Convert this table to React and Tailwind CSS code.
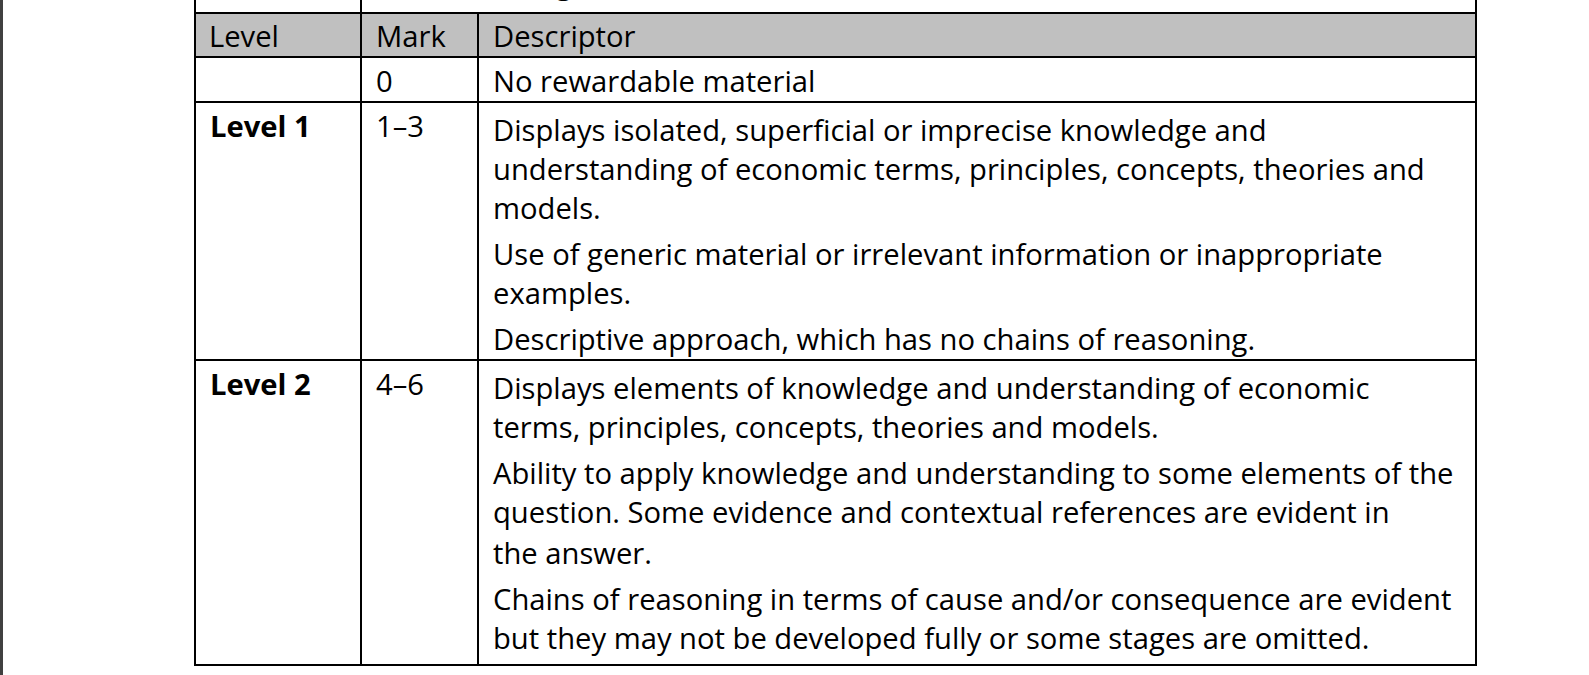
import React from 'react';

const font = { fontFamily: '"Open Sans", "Noto Sans", sans-serif' };

const rows = [
  {
    level: 'Level 1',
    mark: '1–3',
    paras: [
      [
        'Displays isolated, superficial or imprecise knowledge and',
        'understanding of economic terms, principles, concepts, theories and',
        'models.',
      ],
      ['Use of generic material or irrelevant information or inappropriate', 'examples.'],
      ['Descriptive approach, which has no chains of reasoning.'],
    ],
    pb: 'pb-0',
  },
  {
    level: 'Level 2',
    mark: '4–6',
    paras: [
      [
        'Displays elements of knowledge and understanding of economic',
        'terms, principles, concepts, theories and models.',
      ],
      [
        'Ability to apply knowledge and understanding to some elements of the',
        'question. Some evidence and contextual references are evident in',
        'the answer.',
      ],
      [
        'Chains of reasoning in terms of cause and/or consequence are evident',
        'but they may not be developed fully or some stages are omitted.',
      ],
    ],
    pb: 'pb-[6px]',
  },
];

function LevelRow({ row }) {
  return (
    <div className="flex border-b-2 border-black">
      <div className="w-[166px] shrink-0 border-r-2 border-black pl-[14px] pt-[4px] font-bold">
        {row.level}
      </div>
      <div className="w-[117px] shrink-0 border-r-2 border-black pl-[14px] pt-[4px]">{row.mark}</div>
      <div className={`w-[998px] shrink-0 border-r-2 border-black pl-[14px] pt-[1px] ${row.pb}`}>
        {row.paras.map((lines, i) => (
          <div key={i} className="mt-[7px]">
            {lines.map((line, j) => (
              <div key={j} className={`whitespace-nowrap ${line === 'the answer.' ? 'mt-[2px]' : ''}`}>
                {line}
              </div>
            ))}
          </div>
        ))}
      </div>
    </div>
  );
}

export default function App() {
  return (
    <div className="flex h-[675px] w-[1589px] overflow-hidden bg-white text-black" style={font}>
      <div className="w-[3px] shrink-0 bg-[#404040]" />
      <div className="ml-[191px] flex w-[1283px] flex-col self-start border-l-2 border-black text-[29.2px] leading-[39px]">
        {/* cut-off row above the header */}
        <div className="flex h-[14px] border-b-2 border-black">
          <div className="w-[166px] shrink-0 border-r-2 border-black" />
          <div className="w-[1115px] shrink-0 overflow-hidden border-r-2 border-black pl-[99px]">
            <div className="-mt-[36px] whitespace-nowrap">Marking</div>
          </div>
        </div>

        <div className="flex h-[44px] border-b-2 border-black bg-[#c0c0c0]">
          <div className="w-[166px] shrink-0 border-r-2 border-black pl-[13px] pt-[3px]">Level</div>
          <div className="w-[117px] shrink-0 border-r-2 border-black pl-[14px] pt-[3px]">Mark</div>
          <div className="w-[998px] shrink-0 border-r-2 border-black pl-[14px] pt-[3px]">Descriptor</div>
        </div>

        <div className="flex h-[45px] border-b-2 border-black">
          <div className="w-[166px] shrink-0 border-r-2 border-black" />
          <div className="w-[117px] shrink-0 border-r-2 border-black pl-[14px] pt-[4px]">0</div>
          <div className="w-[998px] shrink-0 border-r-2 border-black pl-[14px] pt-[4px]">No rewardable material</div>
        </div>

        {rows.map((row) => (
          <LevelRow key={row.level} row={row} />
        ))}
      </div>
    </div>
  );
}
